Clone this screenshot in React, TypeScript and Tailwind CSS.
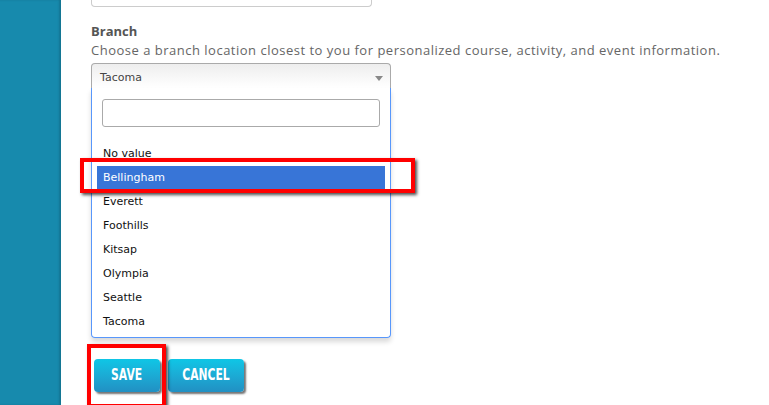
import React from "react";

const options = ["No value", "Bellingham", "Everett", "Foothills", "Kitsap", "Olympia", "Seattle", "Tacoma"];

export default function App() {
  return (
    <div className="relative flex h-[405px] w-[769px] overflow-hidden bg-white" style={{ fontFamily: '"Open Sans", "DejaVu Sans", sans-serif' }}>
      <div className="h-full w-[61px] shrink-0 bg-[#178aad] shadow-[inset_-2px_0_2px_rgba(0,0,0,0.15)]" />
      <div className="flex flex-col pl-[30px]">
        <div className="h-[7px] w-[281px] rounded-b-[4px] border border-t-0 border-[#cccccc]" />
        <div className="mt-[16px] text-[13px] font-bold leading-[16px] text-[#555555]">Branch</div>
        <div className="mt-[3px] text-[13px] leading-[16px] tracking-[0.5px] text-[#666666]">
          Choose a branch location closest to you for personalized course, activity, and event information.
        </div>
        <div className="mt-[5px] w-[300px]" style={{ fontFamily: '"DejaVu Sans", sans-serif' }}>
          <div className="flex h-[25px] items-center justify-between rounded-t-[4px] border border-b-0 border-[#aaaaaa] bg-gradient-to-b from-[#eeeeee] to-[#ffffff] pl-[8px] pr-[7px] pt-[5px] text-[11px] text-[#444444]">
            <span>Tacoma</span>
            <span className="h-0 w-0 border-x-[4px] border-t-[5px] border-x-transparent border-t-[#888888]" />
          </div>
          <div className="rounded-b-[4px] border border-t-0 border-[#5897fb] px-[5px] pb-[3px] pt-[11px] shadow-[0_4px_5px_rgba(0,0,0,0.15)]">
            <div className="mx-[5px] h-[28px] rounded-[3px] border border-[#aaaaaa] bg-white" />
            <div className="mt-[15px] flex flex-col">
              {options.map((o) => (
                <div
                  key={o}
                  className={
                    o === "Bellingham"
                      ? "flex h-[24px] items-center bg-[#3875d7] pl-[6px] text-[11px] text-white"
                      : "flex h-[24px] items-center pl-[6px] text-[11px] text-[#111111]"
                  }
                >
                  {o}
                </div>
              ))}
            </div>
          </div>
        </div>
        <div className="mt-[21px] flex gap-[8px] pl-[3px]" style={{ fontFamily: '"DejaVu Sans", sans-serif' }}>
          <button className="flex h-[33px] w-[66px] items-center justify-center rounded-[4px] bg-gradient-to-b from-[#0ec6e6] to-[#2190c3] text-[15px] font-bold text-white shadow-[2px_2px_2px_rgba(0,0,0,0.55)]">
            <span className="inline-block scale-x-[0.72]">SAVE</span>
          </button>
          <button className="flex h-[33px] w-[76px] items-center justify-center rounded-[4px] bg-gradient-to-b from-[#0ec6e6] to-[#2190c3] text-[15px] font-bold text-white shadow-[2px_2px_2px_rgba(0,0,0,0.55)]">
            <span className="inline-block scale-x-[0.72]">CANCEL</span>
          </button>
        </div>
      </div>
      <div className="pointer-events-none absolute left-[80px] top-[158px] h-[35px] w-[335px] border-[4px] border-[#ff0000] shadow-[2px_2px_3px_rgba(0,0,0,0.7)]" />
      <div className="pointer-events-none absolute left-[87px] top-[344px] h-[64px] w-[79px] border-[4px] border-[#ff0000] shadow-[2px_2px_3px_rgba(0,0,0,0.7)]" />
    </div>
  );
}
